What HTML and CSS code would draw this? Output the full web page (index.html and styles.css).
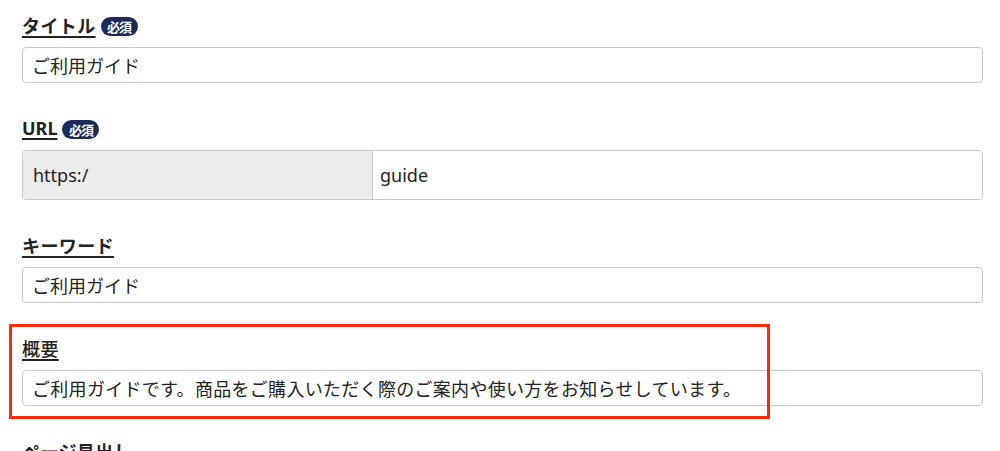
FILE: index.html
```html
<!DOCTYPE html>
<html lang="ja">
<head>
<meta charset="utf-8">
<title>ページ設定</title>
<link rel="stylesheet" href="styles.css">
</head>
<body>
<form class="form">
  <div class="field">
    <div class="label"><span class="label-text">タイトル</span><span class="badge">必須</span></div>
    <input class="input" type="text" value="ご利用ガイド">
  </div>
  <div class="field">
    <div class="label"><span class="label-text label-latin">URL</span><span class="badge">必須</span></div>
    <div class="url-group">
      <span class="url-prefix">https:/</span>
      <input class="url-input" type="text" value="guide">
    </div>
  </div>
  <div class="field">
    <div class="label"><span class="label-text">キーワード</span></div>
    <input class="input" type="text" value="ご利用ガイド">
  </div>
  <div class="field">
    <div class="label"><span class="label-text label-light">概要</span></div>
    <input class="input input-wide" type="text" value="ご利用ガイドです。商品をご購入いただく際のご案内や使い方をお知らせしています。">
  </div>
  <div class="field">
    <div class="label"><span class="label-text">ページ見出し</span></div>
    <input class="input" type="text" value="">
  </div>
</form>
<div class="highlight"></div>
</body>
</html>
```

FILE: styles.css
```css
html, body {
  margin: 0;
  padding: 0;
  background: #ffffff;
  overflow: hidden;
}
body {
  font-family: "Noto Sans", "Noto Sans CJK JP", sans-serif;
  color: #222222;
  position: relative;
  height: 451px;
}
.form {
  display: flex;
  flex-direction: column;
  padding: 12px 17px 0 22px;
}
.field {
  display: flex;
  flex-direction: column;
  margin-bottom: 32px;
}
.label {
  display: flex;
  align-items: center;
  height: 26px;
  margin-bottom: 9px;
  font-size: 18px;
  line-height: 26px;
}
.label-text {
  font-weight: 700;
  letter-spacing: 0.4px;
  text-decoration: underline;
  text-decoration-thickness: 1.5px;
  text-underline-offset: 3px;
  font-family: "Noto Sans CJK JP", "Noto Sans", sans-serif;
}
.label-latin {
  letter-spacing: 0;
  font-family: "Noto Sans", "Noto Sans CJK JP", sans-serif;
}
.label-light {
  font-weight: 500;
}
.badge {
  display: inline-flex;
  align-items: center;
  justify-content: center;
  margin-left: 5px;
  margin-top: 3px;
  width: 37px;
  height: 19px;
  border-radius: 10px;
  background: #1c2a58;
  color: #ffffff;
  font-size: 13px;
  font-weight: 700;
  line-height: 19px;
  letter-spacing: -1px;
  font-family: "Noto Sans CJK JP", sans-serif;
}
.input {
  box-sizing: border-box;
  height: 36px;
  width: 100%;
  margin: 0;
  padding: 0 9px;
  border: 1px solid #c9c9c9;
  border-radius: 4px;
  background: #ffffff;
  font-family: "Noto Sans CJK JP", sans-serif;
  font-size: 18px;
  color: #222222;
  outline: none;
}
.input-wide {
  letter-spacing: 0.3px;
}
.url-group {
  box-sizing: border-box;
  display: flex;
  height: 50px;
  border: 1px solid #c9c9c9;
  border-radius: 4px;
  overflow: hidden;
}
.url-prefix {
  box-sizing: border-box;
  display: flex;
  align-items: center;
  width: 350px;
  padding-left: 10px;
  background: #ececec;
  border-right: 1px solid #c9c9c9;
  font-size: 18px;
  color: #222222;
}
.url-input {
  flex: 1;
  margin: 0;
  border: 0;
  padding: 0 7px;
  font-family: "Noto Sans", "Noto Sans CJK JP", sans-serif;
  font-size: 18px;
  color: #222222;
  outline: none;
  background: #ffffff;
}
.highlight {
  position: absolute;
  left: 9px;
  top: 324px;
  width: 761px;
  height: 95px;
  box-sizing: border-box;
  border: 3px solid #ff2a0c;
  pointer-events: none;
}
```
